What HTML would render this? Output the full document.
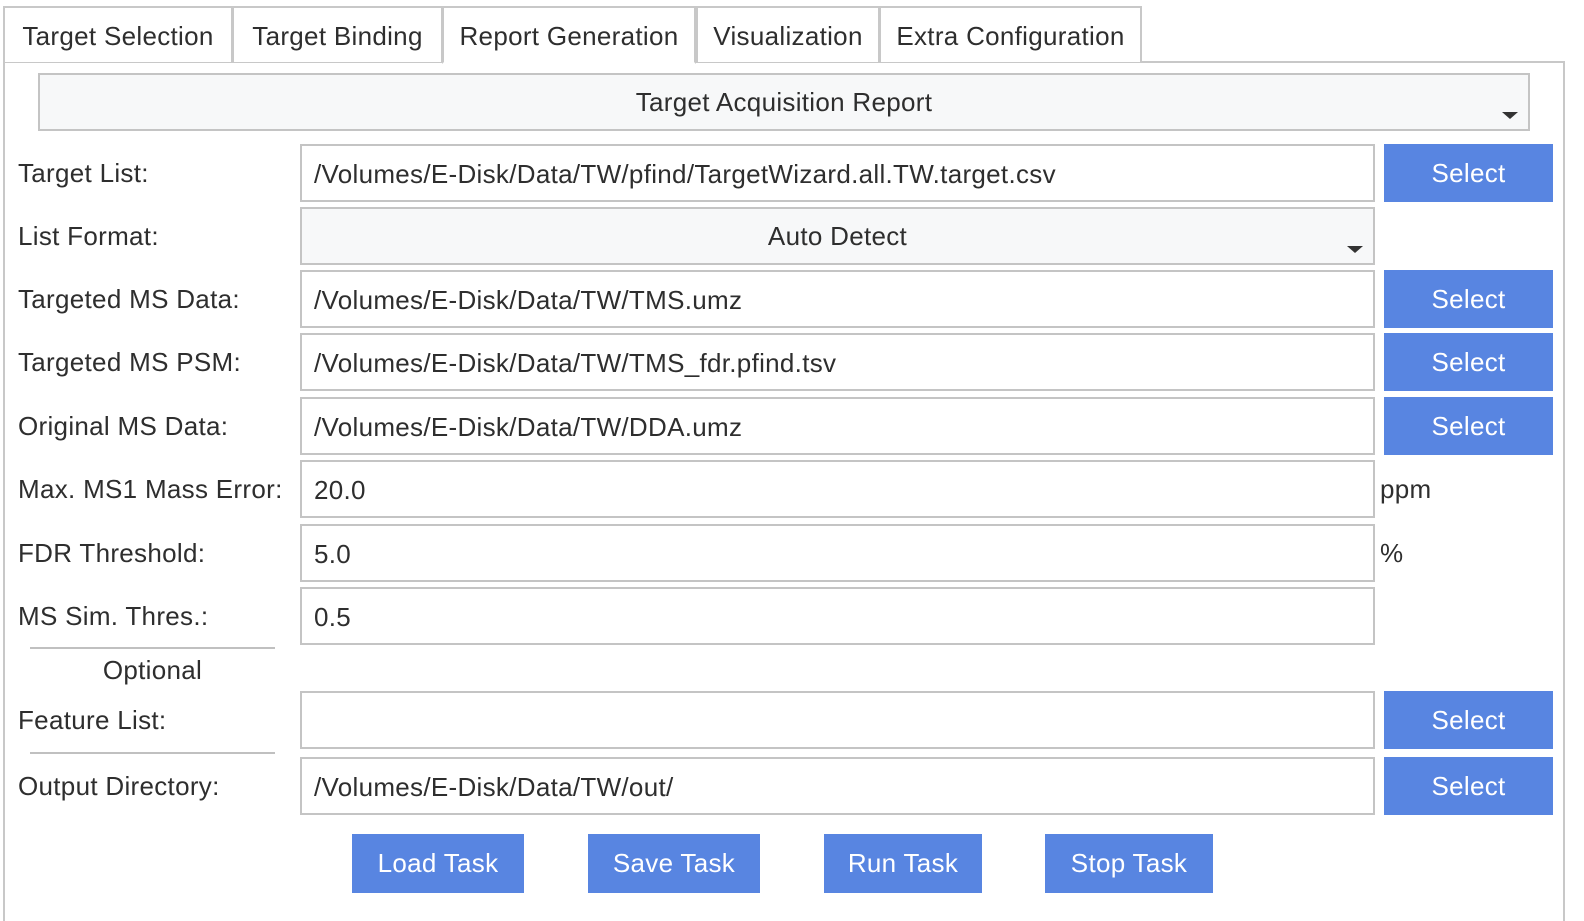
<!DOCTYPE html>
<html><head><style>
body{margin:0;width:1584px;height:910px;background:#fff;font-family:"Liberation Sans",sans-serif;color:#2e2e2e;font-size:26px;letter-spacing:0.3px;position:relative;overflow:hidden}
.a{position:absolute;box-sizing:border-box}
.tab{top:6px;height:56px;border:2px solid #c8c8c8;border-bottom:none;background:#fff;line-height:56px;text-align:center}
.lbl{left:18px;height:58px;line-height:58px}
.in{left:300px;width:1075px;height:58px;border:2px solid #c4c4c4;line-height:56px;padding-left:12px;background:#fff}
.btn{background:#5885e1;color:#fff;text-align:center;height:58px;line-height:58px}
.sel{left:1384px;width:169px}
.combo{background:#f7f8f9;border:2px solid #c4c4c4;text-align:center;line-height:54px}
.arr{position:absolute;right:10px;bottom:10px;width:0;height:0;border-left:8px solid transparent;border-right:8px solid transparent;border-top:7px solid #333}
.sep{left:30px;width:245px;height:2px;background:#c0c0c0}
</style></head><body>
<div class="a" style="left:3px;top:61px;width:1562px;height:860px;border:2px solid #c8c8c8;border-bottom:none"></div>
<div class="a tab" style="left:3px;width:230px">Target Selection</div>
<div class="a tab" style="left:232px;width:211px">Target Binding</div>
<div class="a tab" style="left:442px;width:254px;height:58px;border-bottom:2px solid #fff">Report Generation</div>
<div class="a tab" style="left:696px;width:184px">Visualization</div>
<div class="a tab" style="left:879px;width:263px">Extra Configuration</div>

<div class="a combo" style="left:38px;top:73px;width:1492px;height:58px">Target Acquisition Report<span class="arr"></span></div>

<div class="a lbl" style="top:144px">Target List:</div>
<div class="a in" style="top:144px">/Volumes/E-Disk/Data/TW/pfind/TargetWizard.all.TW.target.csv</div>
<div class="a btn sel" style="top:144px">Select</div>

<div class="a lbl" style="top:207px">List Format:</div>
<div class="a combo" style="left:300px;top:207px;width:1075px;height:58px">Auto Detect<span class="arr"></span></div>

<div class="a lbl" style="top:270px">Targeted MS Data:</div>
<div class="a in" style="top:270px">/Volumes/E-Disk/Data/TW/TMS.umz</div>
<div class="a btn sel" style="top:270px">Select</div>

<div class="a lbl" style="top:333px">Targeted MS PSM:</div>
<div class="a in" style="top:333px">/Volumes/E-Disk/Data/TW/TMS_fdr.pfind.tsv</div>
<div class="a btn sel" style="top:333px">Select</div>

<div class="a lbl" style="top:397px">Original MS Data:</div>
<div class="a in" style="top:397px">/Volumes/E-Disk/Data/TW/DDA.umz</div>
<div class="a btn sel" style="top:397px">Select</div>

<div class="a lbl" style="top:460px">Max. MS1 Mass Error:</div>
<div class="a in" style="top:460px">20.0</div>
<div class="a lbl" style="top:460px;left:1380px">ppm</div>

<div class="a lbl" style="top:524px">FDR Threshold:</div>
<div class="a in" style="top:524px">5.0</div>
<div class="a lbl" style="top:524px;left:1380px">%</div>

<div class="a lbl" style="top:587px">MS Sim. Thres.:</div>
<div class="a in" style="top:587px">0.5</div>

<div class="a sep" style="top:647px"></div>
<div class="a" style="left:30px;width:245px;top:650px;height:40px;line-height:40px;text-align:center">Optional</div>

<div class="a lbl" style="top:691px">Feature List:</div>
<div class="a in" style="top:691px"></div>
<div class="a btn sel" style="top:691px">Select</div>
<div class="a sep" style="top:752px"></div>

<div class="a lbl" style="top:757px">Output Directory:</div>
<div class="a in" style="top:757px">/Volumes/E-Disk/Data/TW/out/</div>
<div class="a btn sel" style="top:757px">Select</div>

<div class="a btn" style="left:352px;top:834px;width:172px;height:59px;line-height:59px">Load Task</div>
<div class="a btn" style="left:588px;top:834px;width:172px;height:59px;line-height:59px">Save Task</div>
<div class="a btn" style="left:824px;top:834px;width:158px;height:59px;line-height:59px">Run Task</div>
<div class="a btn" style="left:1045px;top:834px;width:168px;height:59px;line-height:59px">Stop Task</div>
</body></html>
